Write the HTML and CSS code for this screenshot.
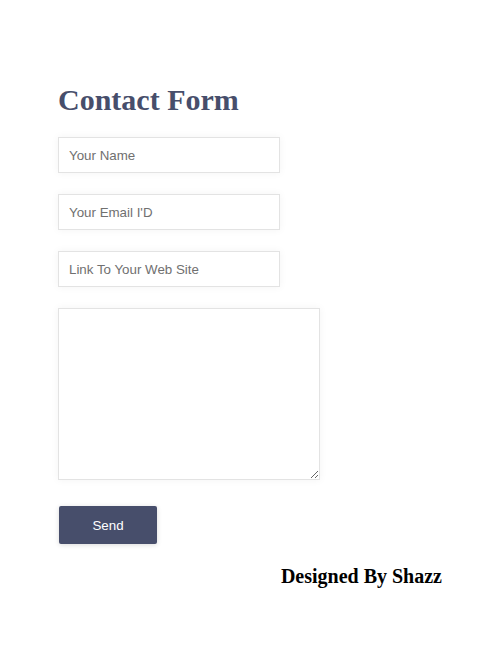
FILE: index.html
```html
<!DOCTYPE html>
<html>
<head>
<meta charset="utf-8">
<link rel="stylesheet" href="styles.css">
</head>
<body>
<div class="page">
  <h1 class="title">Contact Form</h1>
  <form class="form">
    <input class="field" type="text" placeholder="Your Name">
    <input class="field" type="text" placeholder="Your Email I'D">
    <input class="field" type="text" placeholder="Link To Your Web Site">
    <textarea class="message"></textarea>
    <button class="send" type="button">Send</button>
  </form>
  <h3 class="credit">Designed By Shazz</h3>
</div>
</body>
</html>
```
FILE: styles.css
```css
html, body {
  margin: 0;
  padding: 0;
  background: #fff;
}
.page {
  padding: 83px 58px 0 58px;
  font-family: "Liberation Serif", "Times New Roman", serif;
}
.title {
  margin: 0 0 20px 0;
  font-size: 30px;
  line-height: 34px;
  font-weight: bold;
  color: #474e6b;
}
.form {
  display: flex;
  flex-direction: column;
  align-items: flex-start;
}
.field {
  box-sizing: border-box;
  width: 222px;
  height: 36px;
  margin: 0 0 21px 0;
  padding: 0 10px;
  border: 1px solid #e3e3e3;
  box-shadow: 0 0 8px rgba(0,0,0,0.05);
  font-family: "Liberation Sans", Arial, sans-serif;
  font-size: 13.333px;
  color: #333;
  outline: none;
}
.field::placeholder {
  color: #707070;
}
.message {
  box-sizing: border-box;
  width: 262px;
  height: 172px;
  margin: 0 0 26px 0;
  border: 1px solid #e3e3e3;
  box-shadow: 0 0 8px rgba(0,0,0,0.05);
  outline: none;
}
.send {
  width: 98px;
  height: 38px;
  margin: 0 0 0 1px;
  border: none;
  border-radius: 2px;
  background: #474e6b;
  color: #fff;
  font-family: "Liberation Sans", Arial, sans-serif;
  font-size: 13.333px;
  box-shadow: 0 1px 5px rgba(0,0,0,0.15);
}
.credit {
  margin: 21px 0 0 0;
  text-align: right;
  font-size: 20px;
  line-height: 23px;
  font-weight: bold;
  color: #000;
}
```
